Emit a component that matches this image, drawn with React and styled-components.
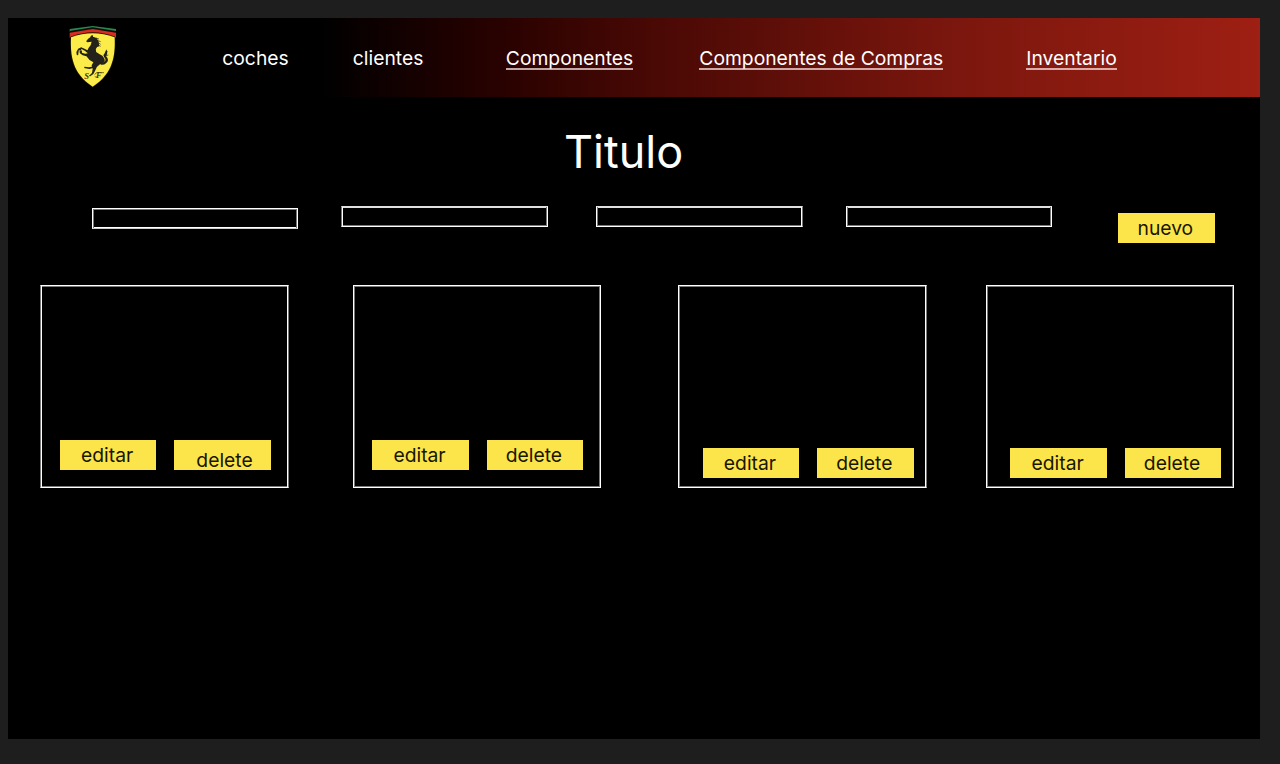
import React from 'react';
import styled, { createGlobalStyle } from 'styled-components';

const GlobalStyle = createGlobalStyle`
  *, *::before, *::after { box-sizing: border-box; }
  body {
    margin: 0;
    background: #1e1e1e;
    font-family: Inter, "Liberation Sans", sans-serif;
  }
`;

const Canvas = styled.div`
  height: 764px;
  padding: 18px 20px 25px 8px;
  background: #1e1e1e;
  overflow: hidden;
`;

const Page = styled.main`
  height: 721px;
  background: #000;
`;

const Header = styled.header`
  display: flex;
  height: 79px;
  background: linear-gradient(90deg, #000 0, #000 310px, #2a0200 500px, #4b0905 655px, #7c170e 955px, #9e1f13 1252px);
`;

const Logo = styled.svg`
  display: block;
  flex: none;
  width: 66px;
  height: 80px;
  margin: -2px 0 0 52px;
`;

const Nav = styled.nav`
  display: flex;
  padding-top: 28px;
  margin-left: 96.3px;
`;

const NavLink = styled.a`
  flex: none;
  width: ${(p) => p.$slot}px;
  font-size: 19.3px;
  line-height: 24px;
  color: #fff;
  white-space: nowrap;
`;

const LinkText = styled.span`
  display: inline-block;
  height: 24px;
  border-bottom: ${(p) => (p.$underlined ? '2px solid rgba(255, 235, 235, 0.7)' : 'none')};
`;

const Title = styled.h1`
  margin: 28px 0 0 556px;
  font-size: 45px;
  font-weight: 400;
  line-height: 54px;
  color: #fff;
`;

const Filters = styled.section`
  display: flex;
  height: 106px;
  padding: 27px 0 0 84px;
`;

const edge = (side) => (side === 'far' ? '#777' : '#fff');
const inner = (side) => (side === 'far' ? '#fff' : '#777');

const Outline = styled.div`
  flex: none;
  border: 1px solid;
  border-color: ${(p) => p.$top || '#fff'} ${(p) => edge(p.$right)} ${(p) => p.$bottom || '#fff'} ${(p) => edge(p.$left)};
  box-shadow:
    inset 1px 0 ${(p) => inner(p.$left)},
    inset -1px 0 ${(p) => inner(p.$right)},
    inset 0 1px ${(p) => p.$topInner || '#777'},
    inset 0 -1px ${(p) => p.$bottomInner || '#777'};
`;

const Field = styled(Outline)`
  width: ${(p) => p.$width || 206}px;
  height: 21px;
  margin: ${(p) => p.$drop || 0}px ${(p) => p.$gap}px 0 0;
`;

const Button = styled.button`
  flex: none;
  width: 96.7px;
  height: 30.5px;
  padding: ${(p) => p.$shiftY || 0}px 0 0 ${(p) => p.$shiftX || 0}px;
  border: 0;
  background: #fce54b;
  color: #191600;
  font: 400 19.3px/30px Inter, "Liberation Sans", sans-serif;
  text-align: center;
  text-indent: -2px;
  white-space: nowrap;
`;

const NewButton = styled(Button)`
  height: 30px;
  margin-top: 7px;
`;

const Cards = styled.section`
  display: flex;
  padding-left: 32px;
`;

const Card = styled(Outline)`
  display: flex;
  align-items: flex-end;
  gap: 17.7px;
  width: ${(p) => p.$width}px;
  height: 203px;
  margin-right: ${(p) => p.$gap}px;
  padding: 0 0 ${(p) => p.$bottomPad}px ${(p) => p.$leftPad}px;
`;

const links = [
  { label: 'coches', slot: 130.5 },
  { label: 'clientes', slot: 153 },
  { label: 'Componentes', slot: 193.5, underlined: true },
  { label: 'Componentes de Compras', slot: 327, underlined: true },
  { label: 'Inventario', slot: 100, underlined: true },
];

const fields = [
  { $gap: 43, $drop: 2, $bottom: '#ccc', $bottomInner: '#fff' },
  { $gap: 48, $width: 207, $left: 'far', $top: '#e0e0e0', $topInner: '#e0e0e0' },
  { $gap: 43, $width: 207, $right: 'far', $top: '#e0e0e0', $topInner: '#e0e0e0' },
  { $gap: 66, $top: '#e0e0e0', $topInner: '#e0e0e0' },
];

const cards = [
  { $width: 249, $gap: 64, $leftPad: 18.8, $bottomPad: 17, $left: 'far', $right: 'far', shiftX: 6, shiftY: 5 },
  { $width: 248, $gap: 77, $leftPad: 18.2, $bottomPad: 17 },
  { $width: 249, $gap: 59, $leftPad: 23.6, $bottomPad: 9, $right: 'far' },
  { $width: 248, $gap: 0, $leftPad: 23.3, $bottomPad: 9 },
];

function Crest() {
  return (
    <Logo viewBox="0 0 198 240" aria-label="Scuderia Ferrari">
      <path d="M29 48V39L98 30L168 39V48L98 38Z" fill="#2c8650" />
      <path d="M29 45L98 34L168 45V50L98 39L29 50Z" fill="#071008" />
      <path d="M29 50L98 39L168 50V65H29Z" fill="#d92c20" />
      <path d="M31 62Q98 35 166 62C168 120 163 173 98 214C33 173 29 120 31 62Z" fill="#191500" />
      <path d="M33 64Q98 40 164 64C166 119 160 172 98 212C36 172 31 119 33 64Z" fill="#fcec49" />
      <path
        d="M96 59L101 57L102 62L112 66L118 76L120 91L114 93L110 99L111 108L120 114L129 119L135 128L136 136L130 143L122 145L113 153L108 164L103 174L94 181L90 180L99 171L101 159L98 148L103 139L92 132L83 121L72 118L64 112L63 106L70 103L70 110L79 113L87 112L79 105L69 99L66 104L61 103L59 118L55 117L54 108L59 98L68 94L79 99L86 103L89 96L95 88L98 77L86 79L82 76L88 68L94 64Z"
        transform="translate(-7 0) scale(1.04 1)"
        fill="#24221a"
      />
      <path d="M103 148Q95 154 87 154L74 152L72 156L88 159Q101 158 108 151Z" fill="#24221a" />
      <path d="M127 136Q143 135 140 124Q130 115 138 108L143 96Q149 108 142 116Q154 129 142 138Q136 144 126 142Z" transform="translate(-4 4)" fill="#24221a" />
      <path d="M108 66L117 69M112 73L122 77M114 80L122 85M114 87L122 91M138 119L145 117M137 110L143 106" stroke="#24221a" strokeWidth="2" />
      <text x="73" y="188" fontFamily="Liberation Serif, serif" fontSize="26" fontStyle="italic" fontWeight="700" fill="#3a3510">S</text>
      <text x="108" y="187" fontFamily="Liberation Serif, serif" fontSize="25" fontStyle="italic" fontWeight="700" fill="#3a3510">F</text>
      <path d="M104 176Q108 168 115 170H132M104 181Q108 186 112 182" fill="none" stroke="#3a3510" strokeWidth="2" />
    </Logo>
  );
}

export default function App() {
  return (
    <>
      <GlobalStyle />
      <Canvas>
        <Page>
          <Header>
            <Crest />
            <Nav>
              {links.map((l) => (
                <NavLink key={l.label} $slot={l.slot}>
                  <LinkText $underlined={l.underlined}>{l.label}</LinkText>
                </NavLink>
              ))}
            </Nav>
          </Header>
          <Title>Titulo</Title>
          <Filters>
            {fields.map((f, i) => (
              <Field key={i} {...f} />
            ))}
            <NewButton>nuevo</NewButton>
          </Filters>
          <Cards>
            {cards.map(({ shiftX, shiftY, ...c }, i) => (
              <Card key={i} {...c}>
                <Button>editar</Button>
                <Button $shiftX={shiftX} $shiftY={shiftY}>delete</Button>
              </Card>
            ))}
          </Cards>
        </Page>
      </Canvas>
    </>
  );
}
